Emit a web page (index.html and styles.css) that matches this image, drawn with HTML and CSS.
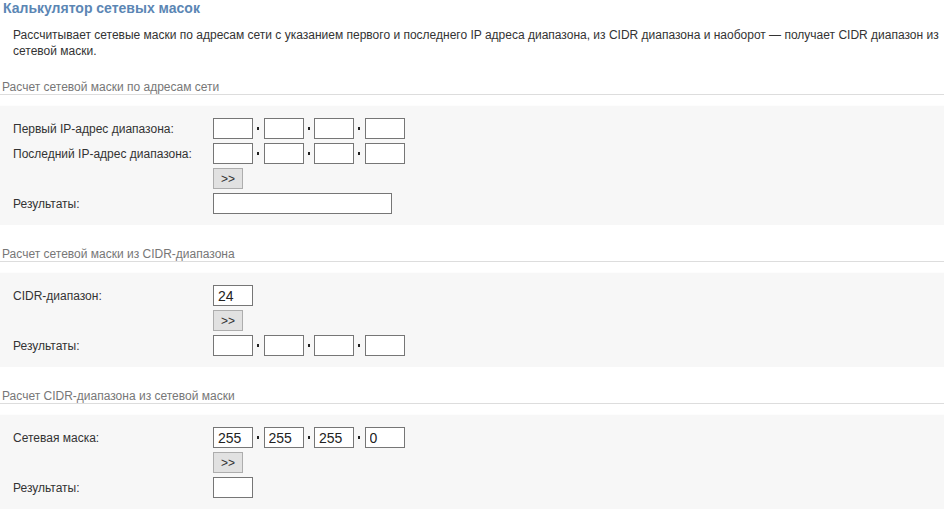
FILE: index.html
```html
<!DOCTYPE html>
<html lang="ru">
<head>
    <meta charset="utf-8">
    <title>Калькулятор сетевых масок</title>
    <link rel="stylesheet" href="styles.css">
</head>
<body>
    <h1 class="title">Калькулятор сетевых масок</h1>
    <p class="intro">Рассчитывает сетевые маски по адресам сети с указанием первого и последнего IP адреса диапазона, из CIDR диапазона и наоборот — получает CIDR диапазон из сетевой маски.</p>

    <div class="section">
        <div class="section-head">Расчет сетевой маски по адресам сети</div>
        <div class="panel">
            <div class="row">
                <label>Первый IP-адрес диапазона:</label>
                <div class="ip">
                    <input type="text"><span class="dot"></span><input type="text"><span class="dot"></span><input type="text"><span class="dot"></span><input type="text">
                </div>
            </div>
            <div class="row">
                <label>Последний IP-адрес диапазона:</label>
                <div class="ip">
                    <input type="text"><span class="dot"></span><input type="text"><span class="dot"></span><input type="text"><span class="dot"></span><input type="text">
                </div>
            </div>
            <div class="row">
                <label></label>
                <button class="go">&gt;&gt;</button>
            </div>
            <div class="row">
                <label>Результаты:</label>
                <input type="text" class="wide">
            </div>
        </div>
    </div>

    <div class="section">
        <div class="section-head">Расчет сетевой маски из CIDR-диапазона</div>
        <div class="panel">
            <div class="row">
                <label>CIDR-диапазон:</label>
                <input type="text" value="24">
            </div>
            <div class="row">
                <label></label>
                <button class="go">&gt;&gt;</button>
            </div>
            <div class="row">
                <label>Результаты:</label>
                <div class="ip">
                    <input type="text"><span class="dot"></span><input type="text"><span class="dot"></span><input type="text"><span class="dot"></span><input type="text">
                </div>
            </div>
        </div>
    </div>

    <div class="section">
        <div class="section-head">Расчет CIDR-диапазона из сетевой маски</div>
        <div class="panel">
            <div class="row">
                <label>Сетевая маска:</label>
                <div class="ip">
                    <input type="text" value="255"><span class="dot"></span><input type="text" value="255"><span class="dot"></span><input type="text" value="255"><span class="dot"></span><input type="text" value="0">
                </div>
            </div>
            <div class="row">
                <label></label>
                <button class="go">&gt;&gt;</button>
            </div>
            <div class="row">
                <label>Результаты:</label>
                <input type="text">
            </div>
        </div>
    </div>
</body>
</html>
```

FILE: styles.css
```css
body {
    font-family: "Liberation Sans", Arial, sans-serif;
    font-size: 12px;
    color: #333;
    margin: 0;
    padding: 0;
    background-color: #fff;
}

.title {
    font-size: 14px;
    line-height: 16px;
    font-weight: bold;
    color: #5b86b4;
    margin: 0;
    padding-left: 3px;
}

.intro {
    margin: 11px 4px 17px 13px;
    line-height: 16px;
}

.section {
    margin-bottom: 18px;
}

.section-head {
    color: #777;
    line-height: 14px;
    padding: 4px 0 0 2px;
    border-bottom: 1px solid #ddd;
    margin-bottom: 10px;
}

.panel {
    background-color: #f7f7f7;
    border-top: 1px solid #fdfdfd;
    padding: 12px 13px 11px;
    display: flex;
    flex-direction: column;
    gap: 4px;
}

.row {
    display: flex;
    align-items: center;
    min-height: 21px;
}

.row label {
    width: 200px;
    flex-shrink: 0;
}

.ip {
    display: flex;
    align-items: center;
}

input {
    box-sizing: border-box;
    width: 40px;
    height: 21px;
    margin: 0;
    padding: 0 4px;
    border: 1px solid #767676;
    background: #fff;
    font-family: "Liberation Sans", Arial, sans-serif;
    font-size: 14px;
    color: #222;
}

input.wide {
    width: 179px;
}

.dot {
    width: 10.5px;
    display: flex;
    justify-content: center;
}

.dot::before {
    content: "";
    width: 2px;
    height: 3px;
    background: #222;
}

.go {
    box-sizing: border-box;
    width: 30px;
    height: 21px;
    margin: 0;
    padding: 0;
    border: 1px solid #adadad;
    background: #e1e1e1;
    font-family: "Liberation Sans", Arial, sans-serif;
    font-size: 12px;
    color: #333;
}
```
